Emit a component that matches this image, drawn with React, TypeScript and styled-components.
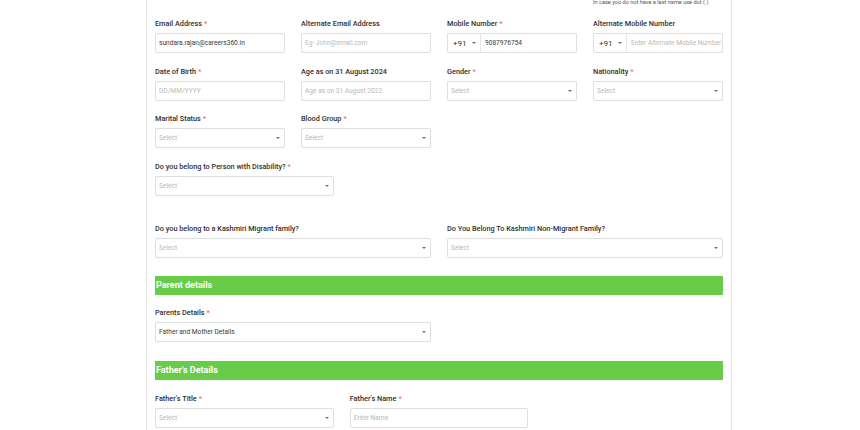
import styled, { createGlobalStyle } from 'styled-components';

const GlobalStyle = createGlobalStyle`
  html, body {
    margin: 0;
    padding: 0;
    background: #ffffff;
  }
  body {
    font-family: Roboto, "Liberation Sans", Arial, sans-serif;
    color: #333333;
    overflow: hidden;
  }
`;

const Page = styled.div`
  width: 860px;
  height: 430px;
  overflow: hidden;
`;

const Card = styled.div`
  width: 568px;
  margin-left: 146px;
  padding: 0 8px;
  min-height: 430px;
  border-left: 1px solid #e6e6e6;
  border-right: 1px solid #e6e6e6;
  box-sizing: content-box;
`;

const Grid = styled.div<{ $cols: number; $mb?: number }>`
  display: grid;
  grid-template-columns: repeat(${({ $cols }) => $cols}, 1fr);
  column-gap: 16px;
  margin-bottom: ${({ $mb }) => $mb ?? 13.5}px;
`;

const Field = styled.div<{ $span?: number }>`
  grid-column: span ${({ $span }) => $span ?? 1};
  display: flex;
  flex-direction: column;
  position: relative;
`;

const Label = styled.label`
  font-size: 7.3px;
  line-height: 10px;
  font-weight: 500;
  color: #2f2f2f;
  margin-bottom: 4px;
  white-space: nowrap;
`;

const Req = styled.span`
  color: #e8707a;
  margin-left: 2px;
`;

const Hint = styled.div`
  position: absolute;
  top: -20px;
  left: 0;
  font-size: 5.6px;
  line-height: 7px;
  color: #555;
  white-space: nowrap;
`;

const Box = styled.div`
  height: 18px;
  border: 1px solid #dedede;
  border-radius: 2px;
  display: flex;
  align-items: center;
  background: #fff;
  font-size: 6.6px;
  overflow: hidden;
`;

const Value = styled.span<{ $placeholder?: boolean }>`
  flex: 1;
  padding-left: 3px;
  color: ${({ $placeholder }) => ($placeholder ? '#b9b9b9' : '#3a3a3a')};
  white-space: nowrap;
  overflow: hidden;
`;

const Caret = styled.span`
  width: 0;
  height: 0;
  border-left: 2px solid transparent;
  border-right: 2px solid transparent;
  border-top: 2.5px solid #707070;
  margin-right: 4px;
`;

const Prefix = styled.div`
  display: flex;
  align-items: center;
  width: 33px;
  height: 100%;
  border-right: 1px solid #e6e6e6;
  font-size: 8px;
  color: #333;
  padding-left: 5px;
  box-sizing: border-box;
  gap: 5px;
  margin-right: 1px;

  & ${Caret} {
    margin-right: 0;
  }
`;

const SectionBar = styled.div<{ $mb?: number }>`
  height: 19px;
  background: #67cc47;
  color: #ffffff;
  font-size: 9px;
  font-weight: 700;
  display: flex;
  align-items: center;
  padding-left: 1px;
  margin-bottom: ${({ $mb }) => $mb ?? 14}px;
`;

const TopSpacer = styled.div`
  height: 19px;
`;

type Opt = { label: string; required?: boolean; span?: number };

const Text = ({ label, required, span, value, placeholder }: Opt & { value?: string; placeholder?: string }) => (
  <Field $span={span}>
    <Label>
      {label}
      {required && <Req>*</Req>}
    </Label>
    <Box>
      <Value $placeholder={!value}>{value || placeholder}</Value>
    </Box>
  </Field>
);

const Select = ({ label, required, span, value }: Opt & { value?: string }) => (
  <Field $span={span}>
    <Label>
      {label}
      {required && <Req>*</Req>}
    </Label>
    <Box>
      <Value $placeholder={!value}>{value || 'Select'}</Value>
      <Caret />
    </Box>
  </Field>
);

const Phone = ({ label, required, value, hint }: Opt & { value?: string; hint?: string }) => (
  <Field>
    {hint && <Hint>{hint}</Hint>}
    <Label>
      {label}
      {required && <Req>*</Req>}
    </Label>
    <Box>
      <Prefix>
        +91 <Caret />
      </Prefix>
      <Value $placeholder={!value}>{value || 'Enter Alternate Mobile Number'}</Value>
    </Box>
  </Field>
);

const Empty = styled.div``;

export default function App() {
  return (
    <Page>
      <GlobalStyle />
      <Card>
        <TopSpacer />
        <Grid $cols={4}>
          <Text label="Email Address" required value="sundara.rajan@careers360.in" />
          <Text label="Alternate Email Address" placeholder="Eg- John@email.com" />
          <Phone label="Mobile Number" required value="9087976754" />
          <Phone label="Alternate Mobile Number" hint="In case you do not have a last name use dot (.)" />
        </Grid>
        <Grid $cols={4}>
          <Text label="Date of Birth" required placeholder="DD/MM/YYYY" />
          <Text label="Age as on 31 August 2024" placeholder="Age as on 31 August 2022" />
          <Select label="Gender" required />
          <Select label="Nationality" required />
        </Grid>
        <Grid $cols={4}>
          <Select label="Marital Status" required />
          <Select label="Blood Group" required />
        </Grid>
        <Grid $cols={3} $mb={28}>
          <Select label="Do you belong to Person with Disability?" required />
          <Empty />
        </Grid>
        <Grid $cols={2} $mb={18}>
          <Select label="Do you belong to a Kashmiri Migrant family?" />
          <Select label="Do You Belong To Kashmiri Non-Migrant Family?" />
        </Grid>
        <SectionBar $mb={13}>Parent details</SectionBar>
        <Grid $cols={2} $mb={19}>
          <Select label="Parents Details" required value="Father and Mother Details" />
        </Grid>
        <SectionBar>Father's Details</SectionBar>
        <Grid $cols={3}>
          <Select label="Father's Title" required />
          <Text label="Father's Name" required placeholder="Enter Name" />
        </Grid>
      </Card>
    </Page>
  );
}
